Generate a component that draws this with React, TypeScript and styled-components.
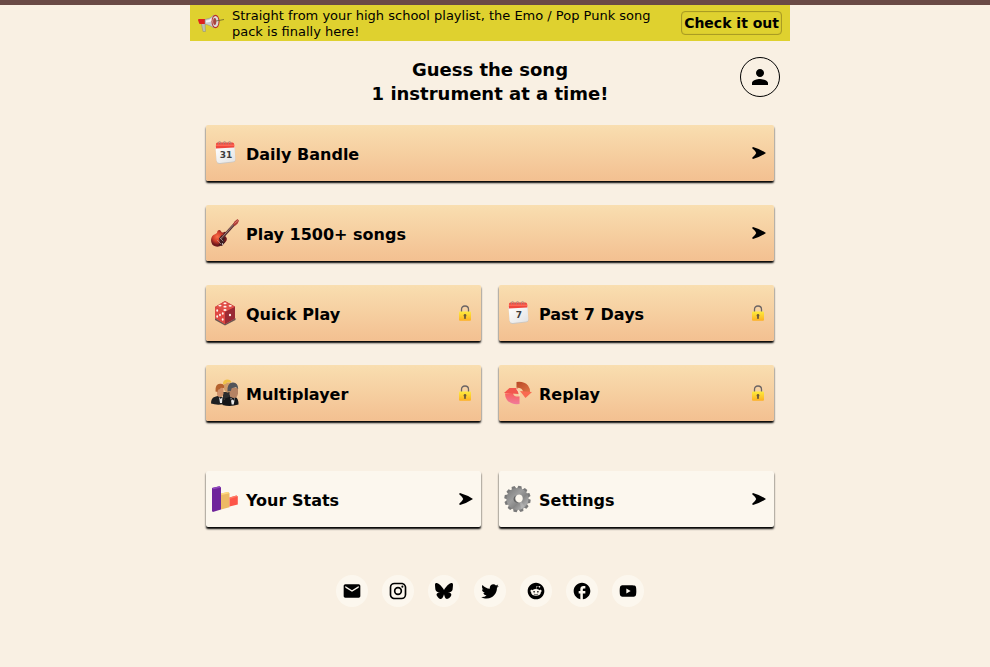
import React from "react";
import styled, { createGlobalStyle, css } from "styled-components";
import { MdEmail, MdFacebook, MdPerson } from "react-icons/md";
import { FaBluesky } from "react-icons/fa6";

const GlobalStyle = createGlobalStyle`
  *, *::before, *::after { box-sizing: border-box; }
  body {
    margin: 0;
    background: #f9f0e3;
    color: #000;
    font-family: Verdana, "DejaVu Sans", sans-serif;
  }
  button { font-family: inherit; color: inherit; cursor: pointer; }
`;

const Page = styled.div`
  min-height: 100vh;
  border-top: 5px solid #6a4a46;
  padding-right: 10px;
`;

const Column = styled.main`
  max-width: 600px;
  margin: 0 auto;
`;

const Banner = styled.aside`
  display: flex;
  align-items: center;
  gap: 8px;
  min-height: 36px;
  padding: 0 8px;
  background: #dfd12f;
`;

const BannerText = styled.p`
  flex: 1;
  margin: 0;
  padding-top: 2px;
  font-size: 13px;
  line-height: 16px;
`;

const BannerButton = styled.button`
  flex: none;
  height: 24px;
  padding: 0 2px;
  border: 1px solid #aa9c23;
  border-radius: 4px;
  background: transparent;
  box-shadow: inset 0 0 1px #aa9c23;
  font-size: 14px;
  font-weight: bold;
  line-height: 16px;
`;

const Header = styled.header`
  display: grid;
  grid-template-columns: 40px 1fr 40px;
  align-items: start;
  padding: 16px 10px 19px;
`;

const Title = styled.h1`
  grid-column: 2;
  margin: 0;
  padding-top: 1px;
  font-size: 18px;
  line-height: 24px;
  text-align: center;
`;

const ProfileButton = styled.button`
  display: grid;
  place-items: center;
  width: 40px;
  height: 40px;
  padding: 0;
  border: 1px solid #000;
  border-radius: 50%;
  background: transparent;
`;

const Menu = styled.nav`
  display: grid;
  grid-template-columns: 1fr 1fr;
  gap: 24px 18px;
  padding: 0 16px;
`;

const SecondaryMenu = styled(Menu)`
  margin-top: 50px;
`;

const Card = styled.button<{ $wide?: boolean; $plain?: boolean }>`
  display: flex;
  align-items: center;
  gap: 7px;
  height: 56px;
  padding: 0 8px 0 5px;
  border: 0;
  border-radius: 2px;
  background: linear-gradient(#f9deb0, #f3c091);
  box-shadow: 0 2px 2px #000;
  font-size: 16px;
  font-weight: bold;
  text-align: left;
  ${(p) => p.$wide && css`grid-column: 1 / -1;`}
  ${(p) => p.$plain && css`background: #fcf7ee;`}
`;

const Label = styled.span`
  flex: 1;
  padding-top: 2px;
`;

const Socials = styled.footer`
  display: flex;
  justify-content: center;
  gap: 14px;
  margin-top: 48px;
`;

const SocialLink = styled.a`
  display: grid;
  place-items: center;
  width: 32px;
  height: 32px;
  border-radius: 50%;
  background: #fcf7ee;
  color: #000;
`;

const Drawing = styled.svg`
  flex: none;
  display: block;
`;

const Megaphone = () => (
  <Drawing width="26" height="18" viewBox="0 0 26 18" aria-hidden>
    <path d="M3 8h4l.5 9.500H5z" fill="#bfc2b4" stroke="#8d8f71" strokeWidth=".5" />
    <path d="M0 6q0-1 1-1h6v5H2q-1 0-1-1z" fill="#e0211d" />
    <path d="M7 5.500Q12 5 16 1v13q-4-3-9-4z" fill="#c9cccd" stroke="#8b8d90" strokeWidth=".5" />
    <path d="M8 6.500Q12 6 15 3.500v3q-3 2-7 2z" fill="#f4f5f5" />
    <ellipse cx="17.500" cy="7.500" rx="4" ry="6.800" fill="#b93128" />
    <ellipse cx="17.500" cy="7.500" rx="3" ry="5.600" fill="#dcdcdc" />
    <ellipse cx="16.700" cy="7.500" rx="1.600" ry="3.400" fill="#a8453f" />
    <path d="M18 7l8-1.500" stroke="#68602a" strokeWidth=".8" />
  </Drawing>
);

const Calendar = ({ day, id }: { day: string; id: string }) => (
  <Drawing width="28" height="28" viewBox="0 0 28 28" aria-hidden>
    <defs>
      <linearGradient id={id} x2="1" y2="1">
        <stop stopColor="#fff" />
        <stop offset="1" stopColor="#e2e2e2" />
      </linearGradient>
    </defs>
    <path d="M4.500 8h19l1 13q0 2-2 2.200L9 25q-3 .2-3.400-2.500z" fill="#cbc7c2" />
    <path d="M4.500 8h19l.8 12q.1 2.200-2 2.400L8.500 24Q6 24 5.500 21.500z" fill={`url(#${id})`} />
    <path d="M5 5q0-1.500 1.500-1.500h15q1.500 0 1.600 1.500l.2 3.500L4.800 9.500z" fill="#f0473d" />
    <path d="M5 5.500h18.200l.1 1.500H5z" fill="#ff6654" />
    <path d="M7.500 5.500Q6.500 2.500 8.500 2.500T10 5.500M12.500 5.500q-1-3 1-3t1.500 3M17.500 5.500q-1-3 1-3t1.500 3" fill="none" stroke="#a88580" strokeWidth=".8" />
    <text x="15" y="19" textAnchor="middle" fontSize="9" fontWeight="bold" fontFamily="DejaVu Sans, sans-serif" fill="#3d3d3d">{day}</text>
  </Drawing>
);

const Guitar = () => (
  <Drawing width="28" height="28" viewBox="0 0 28 28" aria-hidden>
    <defs>
      <radialGradient id="guitarBody" cx=".4" cy=".4">
        <stop stopColor="#fa7048" />
        <stop offset=".55" stopColor="#d4402c" />
        <stop offset="1" stopColor="#6e171b" />
      </radialGradient>
    </defs>
    <path d="M6.500 12q2-2 3.500.3 1 2 3 .7 2.500-1 1.500 1.700-1 2 .5 3.300 2 2-.5 5Q10 28.500 5 27.500q-5-1-5-6.500.3-4.800 4-5.800Q6.500 14.500 6.500 12z" fill="url(#guitarBody)" />
    <path d="M8 19l3-3 3 3-1 3 1 1-3 4-2-1-2 1 2-3z" fill="#3c1c20" />
    <path d="M9.500 20.500L23.500 5" stroke="#532d30" strokeWidth="2.600" />
    <path d="M9.500 20L23 5.200" stroke="#a98983" strokeWidth=".9" />
    <path d="M22 5l1.500-2.500L26.500 0l1.500 1.800-1.500 3-3 2.500z" fill="#ad3b36" />
    <path d="M23.500 4.500L27 1.500" stroke="#ec9a86" strokeWidth=".7" />
    <path d="M6 21l4 4M8.500 18.500l3.800 3.800" stroke="#b9a29c" strokeWidth=".7" />
    <circle cx="11.500" cy="25" r=".7" fill="#fff" />
  </Drawing>
);

const Dice = () => (
  <Drawing width="28" height="28" viewBox="0 0 28 28" aria-hidden>
    <path d="M4 19l10 6 10.500-6v2L14 26.500 4 21z" fill="#6e5551" />
    <path d="M14 2l10 5.500v11.500L14 25 4 19V8z" fill="#b82f36" />
    <path d="M14 2l10 6-10 5L4 8z" fill="#e05048" />
    <path d="M4 8l10 5v12L4 19z" fill="#df4943" />
    <path d="M14 13l10-5v11.500L14 25z" fill="#9a2a34" />
    <g fill="#fff4ed">
      <ellipse cx="14" cy="4.300" rx="1.600" ry=".9" />
      <ellipse cx="9" cy="6.600" rx="1.600" ry=".9" />
      <ellipse cx="14" cy="7.700" rx="1.600" ry=".9" />
      <ellipse cx="19.200" cy="6.800" rx="1.600" ry=".9" />
      <ellipse cx="14" cy="11" rx="1.600" ry=".9" />
      <ellipse cx="6.200" cy="11.500" rx=".9" ry="1.300" />
      <ellipse cx="11.800" cy="14.500" rx=".9" ry="1.300" />
      <ellipse cx="9" cy="16" rx=".9" ry="1.300" />
      <ellipse cx="6.200" cy="17.500" rx=".9" ry="1.300" />
      <ellipse cx="11.700" cy="20.500" rx=".9" ry="1.300" />
      <ellipse cx="19" cy="16" rx="1.100" ry="1.300" />
    </g>
  </Drawing>
);

const People = () => (
  <Drawing width="28" height="28" viewBox="0 0 28 28" aria-hidden>
    <path d="M12 13h7v7h-7z" fill="#2d2d2e" />
    <path d="M13 3.500h7v7q-1.500 3.500-4 3T13 10z" fill="#cf9c6a" />
    <path d="M12 5.500Q11.500 1 16 .5q4 0 4.500 3l-4-.3q-1.500 2.300-4.500 2.300z" fill="#f0c246" />
    <path d="M0 24.500q0-5.500 3.500-6.500L8 16.500l5 2.500v6q-7 1.500-13-.5z" fill="#1d1f22" />
    <path d="M6 8h6.500v6.500Q12 18 9 18t-3-3z" fill="#d0926b" />
    <path d="M4.500 12.500Q4 5 9 4.800t4 4.200l-3-.3q-1.500 2-3 2l-.5 2.300z" fill="#b5622e" />
    <path d="M8 18l1.800 2 1.700-2-.5 6h-2z" fill="#e8e8e8" />
    <path d="M11.500 26Q11.500 20 15.500 19l4-1.500 5 .5q3.200 1.500 3 7.500-8 2.500-16 .5z" fill="#141619" />
    <path d="M18.500 9H27v5.500q-.8 4.500-4 4.500t-4.500-3.500z" fill="#b58363" />
    <path d="M16.500 12.500Q16 4 21.500 3.500t5.700 6.500l-2.200-1.800q-2.500 1-4.200.8l-1 3z" fill="#53555a" />
    <path d="M19.500 18.500l2.200 2.300 2.300-1.800-1.300 6.500h-2z" fill="#e8e8e8" />
    <path d="M20 20l3.500 1.800V19.500L20 21.500z" fill="#111" />
  </Drawing>
);

const Replay = () => (
  <Drawing width="28" height="28" viewBox="0 0 28 28" aria-hidden>
    <defs>
      <linearGradient id="replayTop" x1="0" x2="1" y2="1">
        <stop stopColor="#b74725" />
        <stop offset="1" stopColor="#e07445" />
      </linearGradient>
      <linearGradient id="replayBottom" x2="0" y2="1">
        <stop stopColor="#f95f59" />
        <stop offset="1" stopColor="#f07b9c" />
      </linearGradient>
    </defs>
    <path d="M12.500 3Q20 2 24 6.500q2.300 3 2 6.500h-7q0-2-1.700-3.300-1.800-1-4.800-.9z" fill="url(#replayTop)" />
    <path d="M16 12l12 1-6.500 6z" fill="#f96a50" />
    <path d="M15.500 17.500V25Q7 26 3 21q-2-2.500-2-6.500l8-.5q.2 2 1.700 2.900 1.500.8 4.800.6z" fill="url(#replayBottom)" />
    <path d="M0 14l5.500-5h8l1 6z" fill="#f2574e" />
    <path d="M12.500 9.500l3 4.500v3" fill="none" stroke="#f8d9b5" strokeWidth="1.200" />
  </Drawing>
);

const Bars = () => (
  <Drawing width="28" height="28" viewBox="0 0 28 28" aria-hidden>
    <path d="M1 3l7.500-1.800L10 2.500v22l-8.200 2.500L1 26z" fill="#6f249b" />
    <path d="M1 3l7.500-1.800L10 2.500 2.500 4.200z" fill="#8f47bd" />
    <path d="M10 8.500l7-1.500 1.500 1.200v14L10 24.500z" fill="#edb965" />
    <path d="M10 8.500l7-1.500 1.500 1.200-8 1.800z" fill="#ffda80" />
    <path d="M18.500 12.500l7-2 1.300 1.100v7.900l-8.300 2z" fill="#fd5548" />
    <path d="M18.500 12.500l7-2 1.300 1.100-7.800 2.200z" fill="#ff7c65" />
  </Drawing>
);

const teeth = Array.from({ length: 12 }, (_, i) => i * 30);

const Gear = () => (
  <Drawing width="28" height="28" viewBox="0 0 28 28" aria-hidden>
    <defs>
      <linearGradient id="gearFace" x2="1" y2="1">
        <stop stopColor="#777" />
        <stop offset=".4" stopColor="#9e9e9e" />
        <stop offset=".6" stopColor="#868686" />
        <stop offset=".8" stopColor="#a8a8a8" />
        <stop offset="1" stopColor="#666" />
      </linearGradient>
    </defs>
    {teeth.map((angle) => (
      <path key={angle} d="M11.200 4l.8-3.200h3.200L16.200 4z" fill="#7a7a7a" transform={`rotate(${angle + 10} 13.500 14)`} />
    ))}
    <path fillRule="evenodd" d="M13.500 3a11 11 0 1 1 0 22 11 11 0 0 1 0-22zm2 6.500c-5 0-5.500 6.500-.8 8 5 .3 5.500-7.500.8-8z" fill="url(#gearFace)" />
    <path d="M12 10.500c-2.500 3.500-.5 7 2.700 7-5 1.500-7.200-5-2.700-7z" fill="#606060" />
    <path d="M16 18l1 6 4-2-3.500-5z" fill="#bababa" opacity=".6" />
  </Drawing>
);

const Lock = ({ id }: { id: string }) => (
  <Drawing width="14" height="16" viewBox="0 0 14 16" role="img" aria-label="Locked">
    <defs>
      <linearGradient id={id} x2="0" y2="1">
        <stop stopColor="#fdec3d" />
        <stop offset="1" stopColor="#feb022" />
      </linearGradient>
    </defs>
    <path d="M2.500 7V4.500Q2.500 1 6 1t3.500 3.500V7" fill="none" stroke="#6b6464" strokeWidth="1.300" />
    <rect x="0" y="6.500" width="12" height="9.200" rx="1" fill={`url(#${id})`} />
    <path d="M6 9a1.500 1.500 0 0 1 .8 2.700l.3 2H4.900l.3-2A1.500 1.500 0 0 1 6 9z" fill="#6e5a38" />
  </Drawing>
);

const Arrow = () => (
  <Drawing width="14" height="12" viewBox="0 0 14 12" aria-hidden>
    <path d="M1 0Q8 2 14 6 8 10 1 12L0 11Q3.500 8 4.200 6 3.500 4 0 1z" />
  </Drawing>
);

const MaterialIcon = ({ d }: { d: string }) => (
  <Drawing width="20" height="20" viewBox="0 0 24 24" aria-hidden>
    <path d={d} fill="currentColor" />
  </Drawing>
);

const instagram = "M7.8 2h8.4C19.4 2 22 4.6 22 7.8v8.4a5.8 5.8 0 0 1-5.8 5.8H7.8C4.6 22 2 19.4 2 16.2V7.8A5.8 5.8 0 0 1 7.8 2m-.2 2A3.6 3.6 0 0 0 4 7.6v8.8C4 18.39 5.61 20 7.6 20h8.8a3.6 3.6 0 0 0 3.6-3.6V7.6C20 5.61 18.39 4 16.4 4H7.6m9.65 1.5a1.25 1.25 0 0 1 1.25 1.25A1.25 1.25 0 0 1 17.25 8 1.25 1.25 0 0 1 16 6.75a1.25 1.25 0 0 1 1.25-1.25M12 7a5 5 0 0 1 5 5 5 5 0 0 1-5 5 5 5 0 0 1-5-5 5 5 0 0 1 5-5m0 2a3 3 0 0 0-3 3 3 3 0 0 0 3 3 3 3 0 0 0 3-3 3 3 0 0 0-3-3z";
const twitter = "M22.46 6c-.77.35-1.6.58-2.46.69.88-.53 1.56-1.37 1.88-2.38-.83.5-1.75.85-2.72 1.05C18.37 4.5 17.26 4 16 4c-2.35 0-4.27 1.92-4.27 4.29 0 .34.04.67.11.98C8.28 9.09 5.11 7.38 3 4.79c-.37.63-.58 1.37-.58 2.15 0 1.49.75 2.81 1.91 3.56-.71 0-1.37-.2-1.95-.5v.03c0 2.08 1.48 3.82 3.44 4.21a4.22 4.22 0 0 1-1.93.07 4.28 4.28 0 0 0 4 2.98 8.521 8.521 0 0 1-5.33 1.84c-.34 0-.68-.02-1.02-.06C3.44 20.29 5.7 21 8.12 21 16 21 20.33 14.46 20.33 8.79c0-.19 0-.37-.01-.56.84-.6 1.56-1.36 2.14-2.23z";
const reddit = "M22 12c0 5.52-4.48 10-10 10S2 17.52 2 12 6.48 2 12 2s10 4.48 10 10m-3.33 0c0-.81-.65-1.46-1.46-1.46-.4 0-.75.16-1.01.41-1-.72-2.38-1.18-3.9-1.25l.67-3.13 2.17.47c.02.55.48.99 1.04.99.57 0 1.04-.47 1.04-1.04s-.47-1.04-1.04-1.04c-.41 0-.76.24-.93.59l-2.43-.52c-.07-.02-.14 0-.2.04s-.09.1-.11.17l-.74 3.48c-1.55.05-2.95.5-3.97 1.25-.26-.25-.61-.41-1.01-.41-.81 0-1.46.65-1.46 1.46 0 .59.36 1.1.87 1.33-.02.14-.03.29-.03.44 0 2.24 2.61 4.06 5.83 4.06s5.83-1.82 5.83-4.06c0-.15-.01-.3-.03-.44.51-.23.87-.74.87-1.34M8.67 13.04c0-.57.47-1.04 1.04-1.04s1.04.47 1.04 1.04-.47 1.04-1.04 1.04-1.04-.46-1.04-1.04m5.81 2.75c-.71.71-2.07.77-2.47.77s-1.76-.05-2.47-.77c-.11-.11-.11-.28 0-.38.11-.11.28-.11.38 0 .45.45 1.41.61 2.09.61s1.64-.16 2.09-.61c.11-.11.28-.11.38 0 .1.11.1.28 0 .38m-.19-1.71c-.57 0-1.04-.47-1.04-1.04s.47-1.04 1.04-1.04 1.04.47 1.04 1.04-.47 1.04-1.04 1.04z";
const youtube = "M10 15l5.19-3L10 9v6m11.56-7.83c.13.47.22 1.1.28 1.9.07.8.1 1.49.1 2.09L22 12c0 2.19-.16 3.8-.44 4.83-.25.9-.83 1.48-1.73 1.73-.47.13-1.33.22-2.65.28-1.3.07-2.49.1-3.59.1L12 19c-4.19 0-6.8-.16-7.83-.44-.9-.25-1.48-.83-1.73-1.73-.13-.47-.22-1.1-.28-1.9-.07-.8-.1-1.49-.1-2.09L2 12c0-2.19.16-3.8.44-4.83.25-.9.83-1.48 1.73-1.73.47-.13 1.33-.22 2.65-.28 1.3-.07 2.49-.1 3.59-.1L12 5c4.19 0 6.8.16 7.83.44.9.25 1.48.83 1.73 1.73z";

const modes = [
  { label: "Daily Bandle", icon: <Calendar day="31" id="dailyPage" />, wide: true },
  { label: "Play 1500+ songs", icon: <Guitar />, wide: true },
  { label: "Quick Play", icon: <Dice />, lock: "lockQuick" },
  { label: "Past 7 Days", icon: <Calendar day="7" id="weekPage" />, lock: "lockPast" },
  { label: "Multiplayer", icon: <People />, lock: "lockMulti" },
  { label: "Replay", icon: <Replay />, lock: "lockReplay" },
];

const extras = [
  { label: "Your Stats", icon: <Bars /> },
  { label: "Settings", icon: <Gear /> },
];

const socials = [
  { name: "Email", icon: <MdEmail size={20} /> },
  { name: "Instagram", icon: <MaterialIcon d={instagram} /> },
  { name: "Bluesky", icon: <FaBluesky size={18} /> },
  { name: "Twitter", icon: <MaterialIcon d={twitter} /> },
  { name: "Reddit", icon: <MaterialIcon d={reddit} /> },
  { name: "Facebook", icon: <MdFacebook size={20} /> },
  { name: "YouTube", icon: <MaterialIcon d={youtube} /> },
];

export default function App() {
  return (
    <Page>
      <GlobalStyle />
      <Column>
        <Banner>
          <Megaphone />
          <BannerText>
            Straight from your high school playlist, the Emo / Pop Punk song pack is finally here!
          </BannerText>
          <BannerButton type="button">Check it out</BannerButton>
        </Banner>
        <Header>
          <Title>
            Guess the song
            <br />1 instrument at a time!
          </Title>
          <ProfileButton type="button" aria-label="Profile">
            <MdPerson size={24} />
          </ProfileButton>
        </Header>
        <Menu aria-label="Game modes">
          {modes.map((m) => (
            <Card key={m.label} type="button" $wide={m.wide}>
              {m.icon}
              <Label>{m.label}</Label>
              {m.lock ? <Lock id={m.lock} /> : <Arrow />}
            </Card>
          ))}
        </Menu>
        <SecondaryMenu aria-label="Stats and settings">
          {extras.map((m) => (
            <Card key={m.label} type="button" $plain>
              {m.icon}
              <Label>{m.label}</Label>
              <Arrow />
            </Card>
          ))}
        </SecondaryMenu>
        <Socials>
          {socials.map((s) => (
            <SocialLink key={s.name} href={`#${s.name.toLowerCase()}`} aria-label={s.name}>
              {s.icon}
            </SocialLink>
          ))}
        </Socials>
      </Column>
    </Page>
  );
}
